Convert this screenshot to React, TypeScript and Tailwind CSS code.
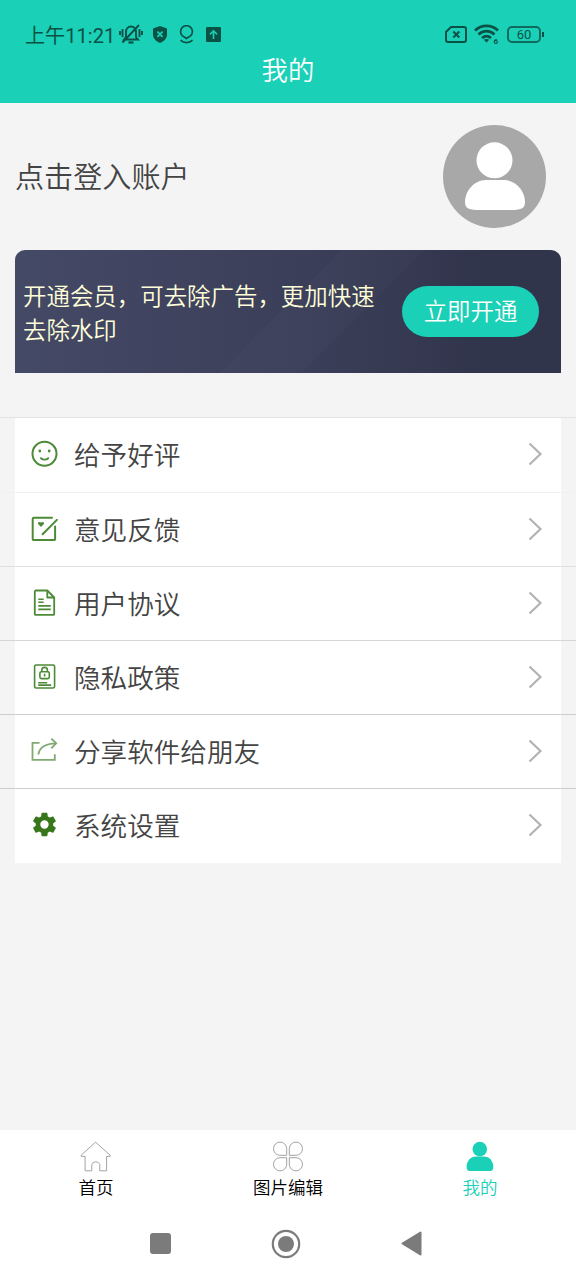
import React from "react";

const green = "#4c8a36";

const SmileIcon = () => (
  <svg width="28" height="28" viewBox="0 0 28 28" fill="none" stroke={green} strokeWidth="2" strokeLinecap="round">
    <circle cx="14.5" cy="13.8" r="12" />
    <path d="M11 18.2c2 1.800 5.200 1.800 7.200 0" />
    <circle cx="9.8" cy="11" r="0.8" fill={green} strokeWidth="1.2" />
    <circle cx="19.2" cy="11" r="0.8" fill={green} strokeWidth="1.2" />
  </svg>
);

const FeedbackIcon = () => (
  <svg width="28" height="28" viewBox="0 0 28 28" fill="none" stroke={green} strokeWidth="2" strokeLinecap="round" strokeLinejoin="round">
    <path d="M22 2.700H3.900a1.200 1.200 0 0 0-1.200 1.200v20a1.200 1.200 0 0 0 1.200 1.200h20a1.200 1.200 0 0 0 1.200-1.200V11.500" />
    <path d="M26.900 4.900 12.600 19.200" />
    <path d="M11 12 8.300 9.300C6.900 7.500 9.400 5.900 11 7.600c1.600-1.700 4.100-.1 2.700 1.700z" fill={green} stroke="none" />
  </svg>
);

const DocumentIcon = () => (
  <svg width="28" height="28" viewBox="0 0 28 28" fill="none" stroke={green} strokeWidth="1.800" strokeLinejoin="round">
    <path d="M17.300 1.500H5.800a1 1 0 0 0-1 1v22.400a1 1 0 0 0 1 1h17.400a1 1 0 0 0 1-1V8.500z" />
    <path d="M17.300 1.500v7h6.900" />
    <path d="M8.300 10.200h5.400M8.300 13.200h5.400M8.300 16.900h12.500M8.300 20.400h12.500" strokeWidth="1.600" />
  </svg>
);

const PrivacyIcon = () => (
  <svg width="28" height="28" viewBox="0 0 28 28" fill="none" stroke={green} strokeWidth="1.600">
    <rect x="4.600" y="2" width="20" height="23" rx="1.600" />
    <rect x="9.900" y="8.700" width="9.400" height="6.900" rx="1.500" />
    <path d="M11.800 8.700V7.200a2.800 2.800 0 0 1 5.600 0v1.500M14.600 10.700v2.700" />
    <path d="M8.200 19.700h9M8.200 22.100h13" />
  </svg>
);

const ShareIcon = () => (
  <svg width="28" height="28" viewBox="0 0 28 28" fill="none" stroke="#7faa70" strokeWidth="1.800">
    <path d="M9.500 5.900H2.500v17h22.300v-5.600" />
    <path d="M8.400 17.500C9.200 10.900 14 6.700 26 6.300M21.300 1.600l4.900 4.700-4.900 5" />
  </svg>
);

const GearIcon = () => (
  <svg width="28" height="28" viewBox="0 0 24 24" fill="#37761a">
    <path transform="translate(.4 -.4)" d="M19.430 12.980c.04-.32.07-.64.07-.98s-.03-.66-.07-.98l2.110-1.650c.19-.15.24-.42.12-.64l-2-3.460c-.12-.22-.39-.3-.61-.22l-2.490 1c-.52-.4-1.080-.73-1.690-.98l-.38-2.650C14.460 2.180 14.250 2 14 2h-4c-.25 0-.46.18-.49.42l-.38 2.650c-.61.25-1.170.59-1.690.98l-2.490-1c-.23-.09-.49 0-.61.22l-2 3.460c-.13.22-.07.49.12.64l2.110 1.650c-.04.32-.07.65-.07.98s.03.66.07.98l-2.110 1.650c-.19.15-.24.42-.12.64l2 3.460c.12.22.39.3.61.22l2.490-1c.52.4 1.080.73 1.690.98l.38 2.650c.03.24.24.42.49.42h4c.25 0 .46-.18.49-.42l.38-2.650c.61-.25 1.170-.59 1.690-.98l2.490 1c.23.09.49 0 .61-.22l2-3.460c.12-.22.07-.49-.12-.64zM12 15.600a3.600 3.600 0 1 1 0-7.200 3.600 3.600 0 0 1 0 7.200z" />
  </svg>
);

interface MenuItem {
  title: string;
  icon: React.ReactNode;
  border: string;
}

const menu: MenuItem[] = [
  { title: "给予好评", icon: <SmileIcon />, border: "border-[#e3e3e3]" },
  { title: "意见反馈", icon: <FeedbackIcon />, border: "border-[#f1f1f1]" },
  { title: "用户协议", icon: <DocumentIcon />, border: "border-[#e0e0e0]" },
  { title: "隐私政策", icon: <PrivacyIcon />, border: "border-[#d6d6d6]" },
  { title: "分享软件给朋友", icon: <ShareIcon />, border: "border-[#cdcdcd]" },
  { title: "系统设置", icon: <GearIcon />, border: "border-[#cdcdcd]" },
];

const StatusBar = () => (
  <div className="flex h-[51px] items-center justify-between pt-[17px] pl-[25px] pr-[32px] font-normal text-[#0b5146]">
    <div className="flex items-center">
      <span className="w-[94px] pt-[3px] whitespace-nowrap font-['Roboto','Noto_Sans_CJK_SC',sans-serif] text-[20.100px] leading-6">上午11:21</span>
      <svg width="24" height="22" viewBox="0 0 24 22" fill="none" stroke="currentColor" strokeWidth="1.900">
        <path d="M5 16.500h14l-2-2.500V9c0-3-2-5.500-5-5.500S7 6 7 9v5zM3.500 6v8M20.500 6v8M1 8v4M23 8v4M20 2 3.500 19.500" />
        <path d="M9.500 19.500h5" strokeWidth="2.200" />
      </svg>
      <svg className="ml-[10px]" width="14" height="17" viewBox="0 0 14 17">
        <path d="M7 0 0 2.600v5.700C0 12.500 3 15.500 7 17c4-1.500 7-4.500 7-8.700V2.600z" fill="currentColor" />
        <path d="m4.400 5.700 5.200 5.200m0-5.200-5.200 5.200" stroke="#1ad0b7" strokeWidth="1.700" />
      </svg>
      <svg className="ml-[12px]" width="15" height="19" viewBox="0 0 15 19" fill="none" stroke="currentColor" strokeWidth="1.700">
        <path d="M7.500 13.500 3.200 10.700a5.900 5.900 0 1 1 8.600 0zM1.500 15.200c3.500 3.200 8.500 3.200 12 0" />
      </svg>
      <svg className="ml-[12px]" width="15" height="15" viewBox="0 0 15 15">
        <rect width="15" height="15" rx="1.200" fill="currentColor" />
        <path d="M7.500 12V4M4 7.400l3.500-3.600L11 7.400" fill="none" stroke="#1ad0b7" strokeWidth="1.600" />
      </svg>
    </div>
    <div className="flex items-center">
      <svg width="22" height="17" viewBox="0 0 22 17" fill="none" stroke="currentColor" strokeWidth="2">
        <path d="M6 1h13a2 2 0 0 1 2 2v11a2 2 0 0 1-2 2H3a2 2 0 0 1-2-2V6z" />
        <path d="m8.300 5.500 6 6m0-6-6 6" />
      </svg>
      <svg className="ml-[7px]" width="26" height="20" viewBox="0 0 26 20" fill="none" stroke="currentColor" strokeWidth="2.700">
        <path d="M1 6.600c6.500-6.200 16.500-6.200 23 0M4.500 10.400c4.700-4.300 11.300-4.300 16 0M8 14c2.700-2.300 6.300-2.300 9 0" />
        <path d="m9.800 15.800 2.700 2.700 2.700-2.700c-1.600-1.200-3.800-1.200-5.400 0z" fill="currentColor" stroke="none" />
        <text x="19.500" y="19.500" fontSize="8" fontWeight="700" fontFamily="Roboto" fill="currentColor" stroke="none">6</text>
      </svg>
      <div className="ml-[7px] flex h-[17px] w-[34px] items-center justify-center rounded-[5px] border-2 border-[#0b5146]/80 font-['Roboto'] text-[13px] leading-none">60</div>
      <div className="ml-px h-[5px] w-[2px] bg-current" />
    </div>
  </div>
);

const App = () => {
  return (
    <div className="flex h-[1280px] w-[576px] flex-col overflow-hidden bg-[#f4f4f4] font-['Noto_Sans_CJK_SC',sans-serif] font-[350] text-[#444]">
      <header className="h-[103px] bg-[#1ad0b7]">
        <StatusBar />
        <h1 className="text-center text-[26.400px] font-[350] leading-[36px] text-white">我的</h1>
      </header>

      <section className="flex h-[147px] items-center justify-between pl-[15px] pr-[30px]">
        <span className="pb-[3px] text-[29.100px] leading-10">点击登入账户</span>
        <svg width="103" height="103" viewBox="0 0 103 103">
          <circle cx="51.500" cy="51.500" r="51.500" fill="#a8a8a8" />
          <circle cx="51.500" cy="35.300" r="18" fill="#fff" />
          <path d="M43 55h18c12 0 21 11 21 22 0 6-3 8-14 8H36c-11 0-14-2-14-8 0-11 9-22 21-22z" fill="#fff" />
        </svg>
      </section>

      <section className="relative mx-[15px] flex h-[123px] items-center justify-between overflow-hidden rounded-t-[10px] bg-linear-to-r from-[#444966] via-[#3b3e58] via-55% to-[#31354c] to-85% pl-2 pr-[22px]">
        <svg className="absolute inset-0" width="546" height="124" viewBox="0 0 546 124">
          <path d="M204 124 327 0h82L286 124z" fill="#fff" opacity="0.020" />
        </svg>
        <p className="relative w-[354px] text-[23.450px] leading-[34px] text-[#ffffd9]">开通会员，可去除广告，更加快速去除水印</p>
        <button className="relative h-[51px] w-[137px] rounded-full bg-[#1ad0b7] pb-0.5 text-[23.450px] text-white">立即开通</button>
      </section>

      <ul className="mt-[44.400px]">
        {menu.map((item) => (
          <li key={item.title} className={`h-[74.200px] border-t px-[15px] ${item.border}`}>
            <div className="flex h-full items-center bg-white pl-[15px] pr-[18px] pb-px">
              {item.icon}
              <span className="ml-4 flex-1 text-[26.600px] leading-9">{item.title}</span>
              <svg width="16" height="24" viewBox="0 0 16 24" fill="none" stroke="#b3b3b3" strokeWidth="2.200">
                <path d="m2.500 1.500 11 10.500-11 10.500" />
              </svg>
            </div>
          </li>
        ))}
      </ul>

      <footer className="mt-auto h-[150px] bg-white">
        <nav className="grid h-[78px] grid-cols-3 pt-[11px] text-[17.500px] leading-6 text-black">
          <div className="flex flex-col items-center">
            <svg width="32" height="32" viewBox="0 0 32 32" fill="none" stroke="#999" strokeWidth="0.900" strokeLinejoin="round">
              <path d="M15.500 1.200 1.200 14.200v1.200h3.900v14.400h6.700v-6c0-3.800 8-3.800 8 0v6h6.800V15.400h3.600v-1.200z" />
            </svg>
            <span className="mt-0.5">首页</span>
          </div>
          <div className="flex flex-col items-center">
            <svg width="32" height="32" viewBox="0 0 32 32" fill="none" stroke="#999" strokeWidth="0.900">
              <path d="M14.700 14.300H8A6.600 6.600 0 1 1 14.700 7.600zM17.300 14.300H24A6.600 6.600 0 1 0 17.300 7.600zM14.700 16.700H8a6.600 6.600 0 1 0 6.700 6.700zM17.300 16.700H24a6.600 6.600 0 1 1-6.700 6.700z" />
            </svg>
            <span className="mt-0.5">图片编辑</span>
          </div>
          <div className="flex flex-col items-center text-[#1ad0b7]">
            <svg width="32" height="32" viewBox="0 0 32 32" fill="currentColor">
              <circle cx="15.800" cy="8.100" r="7.300" />
              <path d="M12 15.600h8c5.500 0 9.300 4.800 9.300 10.500 0 2.600-1 3.900-3 3.900H5.600c-2 0-3-1.300-3-3.900 0-5.700 3.900-10.500 9.400-10.500z" />
            </svg>
            <span className="mt-0.5">我的</span>
          </div>
        </nav>
        <div className="flex h-[72px] items-center justify-between pl-[149.500px] pr-[154px] pb-px">
          <div className="h-[21px] w-[21px] rounded-[3px] bg-[#7b7b7b]" />
          <svg width="30" height="30" viewBox="0 0 30 30">
            <circle cx="15" cy="15" r="13.200" fill="none" stroke="#7b7b7b" strokeWidth="2.200" />
            <circle cx="15" cy="15" r="8" fill="#7b7b7b" />
          </svg>
          <svg width="21" height="25" viewBox="0 0 21 25">
            <path d="M19.500 1.500v22L1.500 12.500z" fill="#7b7b7b" stroke="#7b7b7b" strokeWidth="2" strokeLinejoin="round" />
          </svg>
        </div>
      </footer>
    </div>
  );
};

export default App;
